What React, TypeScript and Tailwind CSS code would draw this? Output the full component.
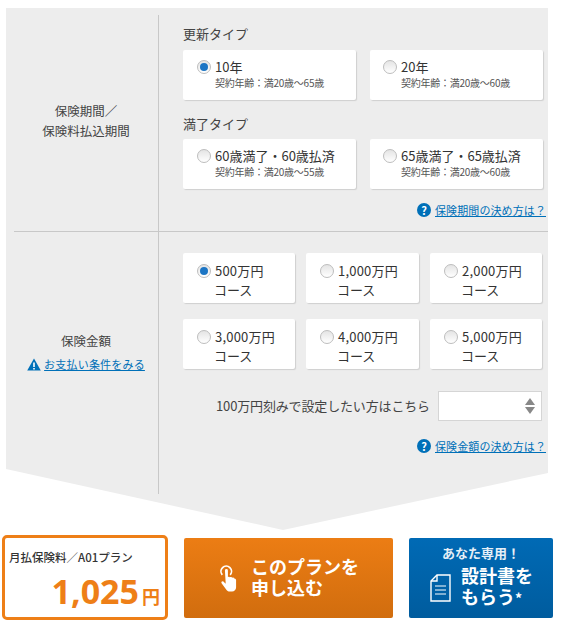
import React from 'react'

const FONT = 'font-["Noto_Sans_CJK_JP","Liberation_Sans",sans-serif]'

const Radio = ({ checked }: { checked?: boolean }) => (
  <span className="flex-shrink-0 w-[14px] h-[14px] rounded-full border border-[#bdbdbd] bg-gradient-to-b from-[#e4e4e4] to-white flex items-center justify-center">
    {checked && <span className="w-[8px] h-[8px] rounded-full bg-[#1c75c4]" />}
  </span>
)

const PlanCard = ({ label, note, checked, className }: { label: string; note: string; checked?: boolean; className: string }) => (
  <div className={`${className} w-[173px] h-[50px] bg-white rounded-[2px] shadow-[1px_1px_1px_#cfcfcf] pt-[8px]`}>
    <div className="flex items-center gap-[4px] h-[18px] text-[13px] text-[#333] whitespace-nowrap">
      <Radio checked={checked} />
      <span>{label}</span>
    </div>
    <div className="pl-[18px] text-[10px] leading-[18px] -mt-[2px] text-[#555] whitespace-nowrap tracking-[-0.25px]">{note}</div>
  </div>
)

const CourseCard = ({ amount, checked, className }: { amount: string; checked?: boolean; className: string }) => (
  <div className={`${className} h-[50px] bg-white rounded-[2px] shadow-[1px_1px_1px_#cfcfcf] pl-[14px] pt-[8px] text-[13px] leading-[20px] text-[#333]`}>
    <div className="flex items-center gap-[4px] whitespace-nowrap">
      <Radio checked={checked} />
      <span className="tracking-[0.2px]">{amount}</span>
    </div>
    <div className="pl-[17px] -mt-[1px]">コース</div>
  </div>
)

const HelpLink = ({ text }: { text: string }) => (
  <div className="flex items-center justify-end gap-[4px] pr-[2px] text-[11px] leading-[16px] text-[#0070b8]">
    <span className="w-[14px] h-[14px] rounded-full bg-[#0070b8] text-white text-[11px] font-bold leading-[14px] text-center">?</span>
    <a className="underline whitespace-nowrap tracking-[0.1px]">{text}</a>
  </div>
)

const HandIcon = () => (
  <svg width="18" height="29" viewBox="0 0 20 33" className="text-white">
    <path d="M3.5 13.5a6 6 0 1 1 9 0" fill="none" stroke="currentColor" strokeWidth="2" />
    <path
      d="M6.5 8.5a1.7 1.7 0 0 1 3.4 0v7.5l1-.3 1 .1v.8l.6-.8 1.6.2.4.9.8-.5 1.6.4.6 1.2.8-.2.9 1.2V28c0 2.4-2 4.5-4.6 4.5h-2.4c-2.1 0-3.4-.9-4.5-2.6l-5-6.9c-1-1.5 1-3 2.300-1.800l2.400 2.300z"
      fill="currentColor"
    />
  </svg>
)

const DocIcon = () => (
  <svg width="21" height="28" viewBox="0 0 21 28" fill="none" stroke="white" strokeWidth="1.4" className="mt-[3px]">
    <path d="M7 1h13v26H1V7z" />
    <path d="M7 1v6H1" />
    <path d="M5 12h11M5 16h11M5 20h11" strokeWidth="1" />
  </svg>
)

const App = () => {
  return (
    <div className={`${FONT} w-[569px] h-[637px] bg-white pt-[8px] overflow-hidden`}>
      {/* gray panel, chevron cut at the bottom */}
      <div className="ml-[6px] w-[542px] h-[522px] bg-[#ededed] pt-[7px] [clip-path:polygon(0_0,100%_0,100%_465px,277px_100%,0_461px)]">
        {/* period section */}
        <div className="flex h-[216px]">
          <div className="w-[153px] border-r border-[#c8c8c8] flex items-center justify-center pl-[8px]">
            <div className="text-center text-[12.500px] leading-[20px] text-[#444] -mt-[5px]">
              保険期間／<br />保険料払込期間
            </div>
          </div>
          <div className="flex-1 pl-[24px] pt-[10px]">
            <div className="text-[13px] leading-[18px] text-[#444]">更新タイプ</div>
            <div className="flex gap-[14px] mt-[7px]">
              <PlanCard className="pl-[14px]" label="10年" note="契約年齢：満20歳～65歳" checked />
              <PlanCard className="pl-[13px]" label="20年" note="契約年齢：満20歳～60歳" />
            </div>
            <div className="text-[13px] leading-[18px] text-[#444] mt-[15px]">満了タイプ</div>
            <div className="flex gap-[14px] mt-[6px]">
              <PlanCard className="pl-[14px]" label="60歳満了・60歳払済" note="契約年齢：満20歳～55歳" />
              <PlanCard className="pl-[13px]" label="65歳満了・65歳払済" note="契約年齢：満20歳～60歳" />
            </div>
            <div className="mt-[13px]">
              <HelpLink text="保険期間の決め方は？" />
            </div>
          </div>
        </div>

        {/* amount section */}
        <div className="ml-[8px] flex h-[263px] border-t border-[#c8c8c8]">
          <div className="w-[145px] border-r border-[#c8c8c8] pt-[100px] text-center">
            <div className="text-[12.500px] leading-[18px] text-[#444]">保険金額</div>
            <div className="flex items-center justify-center gap-[3px] mt-[6px] text-[11px] leading-[16px] text-[#0070b8]">
              <svg width="14" height="13" viewBox="0 0 14 13">
                <path d="M7 .5 13.800 12.500H.2z" fill="#0070b8" />
                <path d="M6.200 4.500h1.600v4.500H6.200zM6.200 10h1.600v1.500H6.200z" fill="white" />
              </svg>
              <a className="underline whitespace-nowrap tracking-[0.2px]">お支払い条件をみる</a>
            </div>
          </div>
          <div className="flex-1 pl-[24px] pt-[21px]">
            <div className="flex gap-[11px]">
              <CourseCard className="w-[112px]" amount="500万円" checked />
              <CourseCard className="w-[113px]" amount="1,000万円" />
              <CourseCard className="w-[112px]" amount="2,000万円" />
            </div>
            <div className="flex gap-[11px] mt-[16px]">
              <CourseCard className="w-[112px]" amount="3,000万円" />
              <CourseCard className="w-[113px]" amount="4,000万円" />
              <CourseCard className="w-[112px]" amount="5,000万円" />
            </div>
            <div className="flex items-center gap-[8px] mt-[22px] pl-[33px]">
              <span className="w-[214px] text-[13px] text-[#444] whitespace-nowrap tracking-[-0.15px]">100万円刻みで設定したい方はこちら</span>
              <div className="w-[104px] h-[30px] bg-white border border-[#d5d5d5] flex flex-col items-end justify-center gap-[2px] pr-[6px]">
                <span className="w-0 h-0 border-x-[5px] border-x-transparent border-b-[7px] border-b-[#888]" />
                <span className="w-0 h-0 border-x-[5px] border-x-transparent border-t-[7px] border-t-[#888]" />
              </div>
            </div>
            <div className="mt-[17px]">
              <HelpLink text="保険金額の決め方は？" />
            </div>
          </div>
        </div>
      </div>

      {/* bottom action row */}
      <div className="flex items-center mt-[5px] ml-[2px]">
        <div className="w-[166px] h-[85px] border-[3px] border-[#ee7f17] rounded-[5px] bg-white px-[4px] pt-[11px]">
          <div className="text-[11.500px] leading-[16px] font-medium text-[#333] whitespace-nowrap">月払保険料／A01プラン</div>
          <div className="flex items-baseline justify-end text-[#ee7f17] font-bold mt-[6px] pr-[1px]">
            <span className="text-[34px] leading-[40px] font-['Open_Sans']">1,025</span>
            <span className="text-[18px] leading-[20px] ml-[3px]">円</span>
          </div>
        </div>
        <div className="ml-[16px] w-[209px] h-[80px] rounded-[2px] bg-gradient-to-b from-[#ec7d14] to-[#d16d0e] flex items-center pl-[35px] gap-[14px] text-white font-bold text-[18px] leading-[21px]">
          <HandIcon />
          <div className="-mt-[2px]">このプランを<br />申し込む</div>
        </div>
        <div className="ml-[16px] w-[144px] h-[80px] rounded-[2px] bg-gradient-to-b from-[#006ab5] to-[#005c9e] text-white font-bold pt-[6px]">
          <div className="text-center text-[13px] leading-[18px] text-[#e6eff7]">あなた専用！</div>
          <div className="flex items-center pl-[21px] gap-[10px] mt-[3px]">
            <DocIcon />
            <div className="text-[18px] leading-[21px] whitespace-nowrap">設計書を<br />もらう<span className="text-[14px]">*</span></div>
          </div>
        </div>
      </div>
    </div>
  )
}

export default App
